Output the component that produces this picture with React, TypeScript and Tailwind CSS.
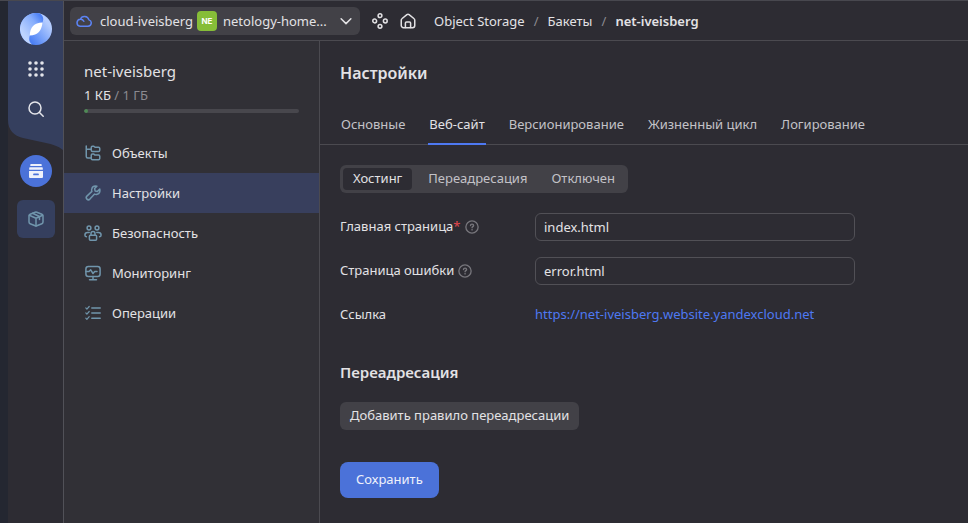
import React, { useState } from "react";

type IconProps = { children: React.ReactNode; className?: string; size?: number };

function Icon({ children, className = "", size = 16 }: IconProps) {
  return (
    <svg
      width={size}
      height={size}
      viewBox="0 0 16 16"
      fill="none"
      stroke="currentColor"
      strokeWidth="1.5"
      strokeLinecap="round"
      strokeLinejoin="round"
      className={`shrink-0 ${className}`}
      aria-hidden="true"
    >
      {children}
    </svg>
  );
}

const cloud = (
  <path d="M4 13.25h8a3.25 3.25 0 0 0 .9-6.37A4.5 4.5 0 0 0 4.3 6.3 3.5 3.5 0 0 0 4 13.25ZM4.3 6.3c1.5-.1 2.9.7 3.5 2" />
);
const folders = (
  <>
    <path d="M1.25.9v10.6c0 .9.6 1.5 1.5 1.5H6M1.25 4.25H6" />
    <path d="M6.25 2.5c0-.7.5-1.25 1.2-1.25h1.4l1.2 1h3.5c.7 0 1.2.5 1.2 1.2v1.8c0 .7-.5 1.2-1.2 1.2H7.45c-.7 0-1.2-.5-1.2-1.2Z" />
    <path d="M6.25 10.3c0-.7.5-1.25 1.2-1.25h1.4l1.2 1h3.5c.7 0 1.2.5 1.2 1.2v2.3c0 .7-.5 1.2-1.2 1.2H7.45c-.7 0-1.2-.5-1.2-1.2Z" />
  </>
);
const wrench = (
  <path d="M11.9 1.2 9.6 3.6l.5 2.3 2.3.5 2.4-2.3c.5 2.4-.6 4.5-2.6 5.1-.9.3-1.8.2-2.6-.1l-4.7 5a2.1 2.1 0 0 1-3-3l5-4.7c-.3-.8-.4-1.7-.1-2.6.6-2 2.7-3.1 5.1-2.6Z" />
);
const people = (
  <>
    <circle cx="4" cy="3" r="1.9" />
    <circle cx="12" cy="3" r="1.9" />
    <path d="M1.4 11.7C.3 11.500-.1 11-.1 10A2.600 2.600 0 0 1 2.500 7.500h1.700M14.600 11.700c1.100-.2 1.500-.7 1.500-1.700A2.600 2.600 0 0 0 13.500 7.500h-1.700" />
    <rect x="4.4" y="10.2" width="7.2" height="5" rx="1" />
    <path d="M6 10V8.6a2 2 0 0 1 4 0V10" />
  </>
);
const monitor = (
  <>
    <rect x=".9" y="1.4" width="14.2" height="10" rx="2.500" />
    <path d="M1 6.500h3L5.700 4.800 8 8.500l1.700-2H12M8 11.500v3M4.500 14.700h7" />
  </>
);
const checklist = (
  <>
    <path d="M6.8 3h8.4M6.8 8h8.4M6.8 13.2h8.4" />
    <path d="m.8 2.9 1.1 1.2L4.2 1.5M.8 7.9l1.1 1.2 2.3-2.6M.8 13.1l1.1 1.2 2.3-2.6" strokeWidth="1.2" />
  </>
);
const help = (
  <>
    <circle cx="8" cy="8" r="7" strokeWidth="1.5" />
    <path d="M6.3 6.4c0-1 .8-1.7 1.8-1.7s1.7.7 1.7 1.6c0 1.3-1.7 1.3-1.7 2.6" strokeWidth="1.6" />
    <circle cx="8.05" cy="11.2" r=".95" fill="currentColor" stroke="none" />
  </>
);
const house = (
  <>
    <path d="M1.25 7.2c0-.7.3-1.3.9-1.7L6.9 1.7a1.8 1.8 0 0 1 2.2 0l4.75 3.8c.6.4.9 1 .9 1.7v5.3c0 1.2-1 2.2-2.2 2.2h-9.1c-1.2 0-2.2-1-2.2-2.2Z" />
    <path d="M5.4 14.5V10c0-.6.5-1.1 1.1-1.1h3c.6 0 1.1.5 1.1 1.1v4.5" />
  </>
);
const nodes = (
  <>
    <circle cx="8" cy="2.700" r="1.900" />
    <circle cx="2.700" cy="8" r="1.900" />
    <circle cx="13.300" cy="8" r="1.900" />
    <circle cx="8" cy="13.300" r="1.900" />
  </>
);
const box = (
  <>
    <path d="M7.2 1.2 2.1 3.3c-.7.3-1.1.9-1.1 1.6v6.2c0 .7.4 1.3 1.1 1.6l5.1 2.1c.5.2 1.1.2 1.6 0l5.1-2.1c.7-.3 1.1-.9 1.1-1.6V4.9c0-.7-.4-1.3-1.1-1.6L8.8 1.2c-.5-.2-1.1-.2-1.6 0Z" />
    <path d="M1.3 4.3 8 7.2l6.7-2.9M8 7.2V15M4.6 2.3l6.9 3.2v3" />
  </>
);

const menu = [
  { label: "Объекты", icon: folders },
  { label: "Настройки", icon: wrench },
  { label: "Безопасность", icon: people },
  { label: "Мониторинг", icon: monitor },
  { label: "Операции", icon: checklist },
];
const tabs = ["Основные", "Веб-сайт", "Версионирование", "Жизненный цикл", "Логирование"];
const modes = ["Хостинг", "Переадресация", "Отключен"];

function Rail() {
  return (
    <nav aria-label="Сервисы" className="relative flex w-14 shrink-0 flex-col items-center border-r border-[#515158] bg-[#2d2c33] pt-3">
      <svg className="absolute top-0 left-0" width="55" height="150" viewBox="0 0 55 150" aria-hidden="true">
        <path d="M0 0H55V149C50 145 44 143 38 142L15 137C6 135 0 129 0 119Z" fill="#353f5e" />
      </svg>
      <a href="#home" aria-label="Yandex Cloud" className="relative">
        <svg width="32" height="32" viewBox="0 0 32 32" aria-hidden="true">
          <defs>
            <linearGradient id="upper" gradientUnits="userSpaceOnUse" x1="22" y1="5" x2="3" y2="20">
              <stop offset="0" stopColor="#4c80f5" />
              <stop offset=".35" stopColor="#86adfc" />
              <stop offset="1" stopColor="#bdd3ff" />
            </linearGradient>
            <linearGradient id="lower" gradientUnits="userSpaceOnUse" x1="10" y1="27" x2="29" y2="12">
              <stop offset="0" stopColor="#4c80f5" />
              <stop offset=".35" stopColor="#6f9bf9" />
              <stop offset="1" stopColor="#b4ccff" />
            </linearGradient>
          </defs>
          <circle cx="16" cy="16" r="16" fill="url(#lower)" />
          <path d="M20 .500C23.500 3 24 6 22.300 10L10 22C8.500 26 9 29 12 31.500A16 16 0 1 1 20 .500Z" fill="url(#upper)" />
          <path d="M22.500 9.500C14 10 10 14 9.800 22.500C18 22 21.500 18 22.500 9.500Z" fill="#fff" />
        </svg>
      </a>
      <button type="button" aria-label="Все сервисы" className="relative mt-1 flex h-10 items-center text-[#e4e5ea]">
        <svg width="16" height="16" viewBox="0 0 16 16" fill="currentColor" aria-hidden="true">
          {[2, 8, 14].map((y) => [2, 8, 14].map((x) => <circle key={`${x}-${y}`} cx={x} cy={y} r="1.8" />))}
        </svg>
      </button>
      <button type="button" aria-label="Поиск" className="relative flex h-10 items-center text-[#e4e5ea]">
        <Icon>
          <circle cx="7" cy="7" r="6" />
          <path d="m11.500 11.500 3.700 3.700" />
        </Icon>
      </button>
      <a href="#storage" aria-label="Object Storage" className="mt-[26px] flex size-8 items-center justify-center rounded-full bg-[#4b72d9] text-[#eef1fb]">
        <svg width="16" height="16" viewBox="0 0 16 16" fill="currentColor" aria-hidden="true">
          <path d="M3 1h10a.7.7 0 0 1 .7.700V3H2.300V1.700A.7.7 0 0 1 3 1ZM2 4.200h12a.8.8 0 0 1 .8.800v1.800H1.200V5a.8.8 0 0 1 .8-.8Z" />
          <path fillRule="evenodd" d="M1 8h14v6a1 1 0 0 1-1 1H2a1 1 0 0 1-1-1ZM6 10.500a.9.9 0 0 0 0 1.800h4a.9.9 0 0 0 0-1.800Z" />
        </svg>
      </a>
      <a href="#bucket" aria-label="Бакет" className="mt-[13px] flex size-[38px] items-center justify-center rounded-md bg-[#353f5e] text-[#7095ac]">
        <Icon>{box}</Icon>
      </a>
    </nav>
  );
}

function Header() {
  return (
    <header className="flex h-10 items-center border-b border-[#4b4a50] pl-1.5">
      <button type="button" className="flex h-7 w-[290px] items-center rounded-md bg-[#424147] pr-2 pl-1.5">
        <Icon className="text-[#5c83f3]">{cloud}</Icon>
        <span className="ml-2 w-[97px] text-left">cloud-iveisberg</span>
        <span className="flex size-5 shrink-0 items-center justify-center rounded bg-[#86bd38] font-[Inter] text-[8px] font-bold text-white">NE</span>
        <span className="ml-1.5 flex-1 text-left whitespace-nowrap">netology-home...</span>
        <Icon size={12}>
          <path d="m1.500 5 6.500 6.500L14.500 5" strokeWidth="2" />
        </Icon>
      </button>
      <nav aria-label="Путь" className="flex items-center">
        <button type="button" aria-label="Ресурсы" className="ml-3"><Icon>{nodes}</Icon></button>
        <a href="#home" aria-label="Главная" className="ml-3"><Icon>{house}</Icon></a>
        <a href="#storage" className="ml-[18px]">Object Storage</a>
        <span className="w-[23px] text-center text-[#8b8a90]">/</span>
        <a href="#buckets">Бакеты</a>
        <span className="w-[23px] text-center text-[#8b8a90]">/</span>
        <span className="font-semibold">net-iveisberg</span>
      </nav>
    </header>
  );
}

function Sidebar() {
  return (
    <aside className="w-64 shrink-0 border-r border-[#4b4a50] bg-[#313036] pt-5">
      <div className="px-5">
        <div className="text-[15px] leading-5">net-iveisberg</div>
        <div className="mt-1 leading-5">1 КБ <span className="text-[#8b8a90]">/ 1 ГБ</span></div>
        <div className="mt-1 h-1 overflow-hidden rounded-sm bg-[#48474d]">
          <div className="h-1 w-1 rounded-sm bg-[#4f8a55]" />
        </div>
      </div>
      <ul className="mt-5">
        {menu.map(({ label, icon }) => (
          <li key={label}>
            <a
              href={`#${label}`}
              className={`flex h-10 items-center gap-[11px] pl-[21px] ${label === "Настройки" ? "bg-[#383f5d]" : ""}`}
            >
              <Icon className="overflow-visible text-[#7095ac]">{icon}</Icon>
              {label}
            </a>
          </li>
        ))}
      </ul>
    </aside>
  );
}

function Field({ id, label, value, required = false }: { id: string; label: string; value: string; required?: boolean }) {
  return (
    <div className="flex h-7 items-center">
      <div className="flex w-[195px] items-center gap-1">
        <label htmlFor={id} className="pb-0.5">
          {label}
          {required && <span className="text-[#e5484d]">*</span>}
        </label>
        <Icon size={14} className="text-[#77767c]">{help}</Icon>
      </div>
      <input id={id} defaultValue={value} className="h-7 w-80 rounded-md border border-[#515056] bg-transparent px-2 outline-none" />
    </div>
  );
}

function Settings() {
  const [mode, setMode] = useState("Хостинг");
  return (
    <main className="min-w-0 flex-1">
      <h1 className="mt-5 px-5 text-base leading-6 font-semibold">Настройки</h1>
      <div role="tablist" className="mt-5 flex h-10 gap-[22px] border-b border-[#4b4a50] px-5">
        {tabs.map((tab) => (
          <button
            key={tab}
            type="button"
            role="tab"
            aria-selected={tab === "Веб-сайт"}
            className={`-mb-px h-10 border-b-2 px-px ${tab === "Веб-сайт" ? "border-[#4e79f2] text-[#e3e2e5]" : "border-transparent text-[#c3c2c7]"}`}
          >
            {tab}
          </button>
        ))}
      </div>
      <form className="px-5 pt-5" onSubmit={(e) => e.preventDefault()}>
        <div role="radiogroup" aria-label="Режим" className="flex h-7 w-fit rounded-md bg-[#424147] p-[3px]">
          {modes.map((m) => (
            <label
              key={m}
              className={`flex items-center rounded px-2.5 pb-0.5 ${m === mode ? "bg-[#2d2c33]" : "text-[#c3c2c7]"} ${m === "Переадресация" ? "mr-1 ml-1.5" : ""}`}
            >
              <input type="radio" name="mode" className="sr-only" checked={m === mode} onChange={() => setMode(m)} />
              {m}
            </label>
          ))}
        </div>
        <div className="mt-5 flex flex-col gap-4">
          <Field id="index" label="Главная страница" value="index.html" required />
          <Field id="error" label="Страница ошибки" value="error.html" />
          <div className="flex h-7 items-center pb-0.5">
            <span className="w-[195px]">Ссылка</span>
            <a href="https://net-iveisberg.website.yandexcloud.net" className="text-[#4e79f2]">https://net-iveisberg.website.yandexcloud.net</a>
          </div>
        </div>
        <h2 className="mt-[31px] text-[15px] leading-6 font-semibold">Переадресация</h2>
        <button type="button" className="mt-[18px] block h-7 rounded-md bg-[#424147] px-2.5 pb-0.5">Добавить правило переадресации</button>
        <button type="submit" className="mt-8 block h-9 rounded-lg bg-[#4b72d9] px-4 pb-0.5 text-[#eef1fb]">Сохранить</button>
      </form>
    </main>
  );
}

export default function App() {
  return (
    <div className="flex min-h-screen border-t border-[#48484f] bg-[#2d2c33] font-['Noto_Sans',sans-serif] text-[13px] leading-[18px] text-[#e3e2e5]">
      <div className="w-2 shrink-0 bg-[#242731]" />
      <Rail />
      <div className="flex min-w-0 flex-1 flex-col">
        <Header />
        <div className="flex flex-1">
          <Sidebar />
          <Settings />
        </div>
      </div>
    </div>
  );
}
